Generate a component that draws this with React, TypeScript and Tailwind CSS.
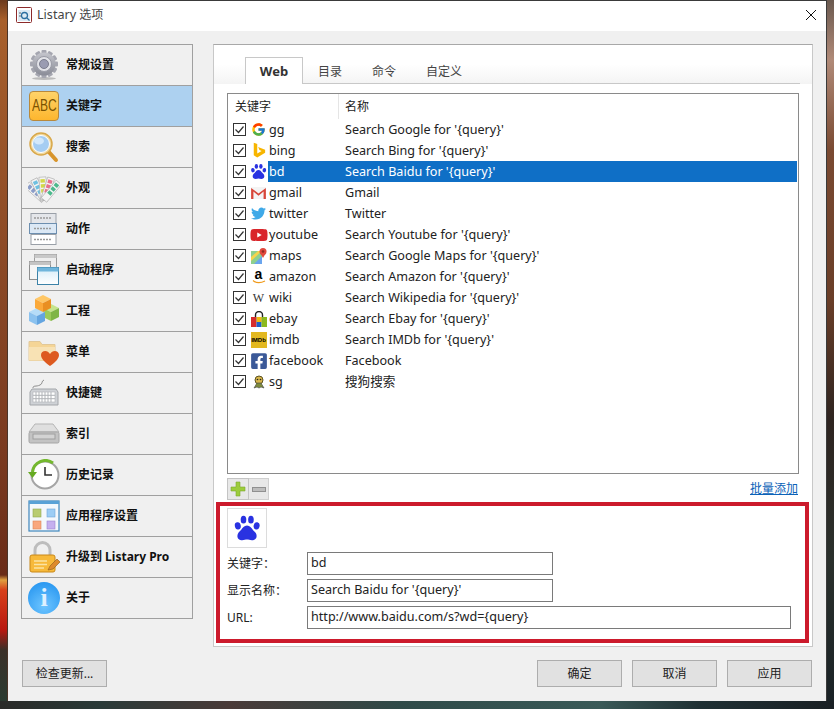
import type { ReactNode } from 'react';
import { FcGoogle } from 'react-icons/fc';
import { FaTwitter, FaYoutube, FaFacebookSquare } from 'react-icons/fa';

const FONT = "font-['Noto_Sans','Noto_Sans_CJK_SC',sans-serif]";
// 拉丁文字比中文略大一点
const LATIN = 'text-[12.6px]';

function Paw({ size = 16, color = '#2932e1' }: { size?: number; color?: string }) {
  return (
    <svg width={size} height={size} viewBox="0 0 32 32">
      <g fill={color}>
        <ellipse cx="5.5" cy="13.5" rx="3.4" ry="4.2" transform="rotate(-12 5.5 13.5)" />
        <ellipse cx="12" cy="6.5" rx="3.2" ry="4.4" />
        <ellipse cx="20.5" cy="6.5" rx="3.2" ry="4.4" />
        <ellipse cx="27" cy="13.5" rx="3.4" ry="4.2" transform="rotate(12 27 13.5)" />
        <path d="M16 13c3.4 0 5 2.6 6.6 5 1.6 2 4.4 3.6 4.4 7 0 3.4-2.8 5-5.4 5-2.4 0-4-.8-5.6-.8s-3.2.8-5.6.8C7.800 30 5 28.400 5 25c0-3.400 2.800-5 4.400-7 1.600-2.400 3.200-5 6.600-5z" />
      </g>
    </svg>
  );
}

function GearIcon() {
  const teeth = [0, 30, 60, 90, 120, 150];
  return (
    <svg width="32" height="32" viewBox="0 0 32 32">
      <defs>
        <linearGradient id="gear" x1="0" y1="0" x2="0" y2="1">
          <stop offset="0" stopColor="#c4c5cc" />
          <stop offset="1" stopColor="#8a8c97" />
        </linearGradient>
      </defs>
      <ellipse cx="16" cy="29.500" rx="12" ry="1.500" fill="#bbb" />
      {teeth.map(a => (
        <rect key={a} x="13.500" y="1" width="5" height="28" rx="1" fill="#a5a6b0" transform={`rotate(${a} 16 15)`} />
      ))}
      <circle cx="16" cy="15" r="11.500" fill="url(#gear)" />
      <circle cx="16" cy="15" r="7.500" fill="#e2e3e8" stroke="#9a9ba6" />
      <circle cx="16" cy="15" r="4.500" fill="#9a9cb2" stroke="#7c7e8e" />
    </svg>
  );
}

function AbcIcon() {
  return (
    <div className="flex h-[30px] w-[30px] items-center justify-center rounded-[4px] border border-[#b8893c] bg-[linear-gradient(#ffd369,#fdb62e)] text-[#7a5200]">
      <span className="scale-x-75 font-['Liberation_Sans',sans-serif] text-[16px] leading-none">ABC</span>
    </div>
  );
}

function SearchIcon() {
  return (
    <svg width="32" height="32" viewBox="0 0 32 32">
      <path d="M20 20l8 9" stroke="#d8952c" strokeWidth="4" strokeLinecap="round" />
      <circle cx="13" cy="13" r="11" fill="#f0d9a0" stroke="#d9a84a" strokeWidth="1.500" />
      <circle cx="13" cy="13" r="8.500" fill="#a5cdf2" stroke="#fff" />
      <ellipse cx="11" cy="10" rx="5" ry="3.500" fill="#d3e8fa" />
    </svg>
  );
}

function PaletteIcon() {
  const cards = [
    { a: -48, c: '#8a9cc8' },
    { a: -26, c: '#6fc0e0' },
    { a: -4, c: '#d4d84a' },
    { a: 18, c: '#e8708c' },
    { a: 40, c: '#4cb88c' },
  ];
  return (
    <svg width="32" height="32" viewBox="0 0 32 32">
      {cards.map(k => (
        <g key={k.a} transform={`rotate(${k.a} 16 28)`}>
          <rect x="12.500" y="5" width="7" height="23" fill="#f4f4f4" stroke="#a8a8a8" strokeWidth=".6" />
          <rect x="13.800" y="7" width="4.400" height="3.500" fill={k.c} />
          <rect x="13.800" y="12" width="4.400" height="3.500" fill={k.c} />
          <rect x="13.800" y="17" width="4.400" height="3.500" fill={k.c} />
        </g>
      ))}
    </svg>
  );
}

function ActionIcon() {
  return (
    <svg width="32" height="32" viewBox="0 0 32 32">
      <rect x="3" y="0.500" width="25" height="10" fill="#e4e6ea" stroke="#9aa0a8" />
      <rect x="3" y="21.500" width="25" height="10" fill="#fff" stroke="#9aa0a8" />
      <rect x="1.500" y="10.500" width="27" height="10" fill="#dbe8f5" stroke="#6d8fb0" />
      <path d="M6 5h18M6 15.500h18M6 26.500h18" stroke="#9a9a9a" strokeWidth="1.600" strokeDasharray="2 1" />
    </svg>
  );
}

function AppsIcon() {
  return (
    <svg width="32" height="32" viewBox="0 0 32 32">
      <rect x="6.500" y="0.500" width="22" height="18" fill="#eee" stroke="#9c9c9c" />
      <rect x="6.500" y="0.500" width="22" height="3.500" fill="#c8c8c8" />
      <rect x="1.500" y="7.500" width="21" height="18" fill="#f5f5f5" stroke="#8f8f8f" />
      <rect x="1.500" y="7.500" width="21" height="3.500" fill="#c4c4c4" />
      <rect x="9.500" y="13.500" width="21" height="17" fill="url(#appsbody)" stroke="#3b82a8" />
      <rect x="9.500" y="13.500" width="21" height="4" fill="#6fb5dc" />
      <defs>
        <linearGradient id="appsbody" x1="0" y1="0" x2="0" y2="1">
          <stop offset="0" stopColor="#d5ecf9" />
          <stop offset="1" stopColor="#ffffff" />
        </linearGradient>
      </defs>
    </svg>
  );
}

function Cube({ x, y, top, left, right }: { x: number; y: number; top: string; left: string; right: string }) {
  return (
    <g transform={`translate(${x} ${y})`}>
      <path d="M0 4l8-4 8 4-8 4z" fill={top} />
      <path d="M0 4l8 4v9l-8-4z" fill={left} />
      <path d="M16 4l-8 4v9l8-4z" fill={right} />
    </g>
  );
}

function ProjectIcon() {
  return (
    <svg width="32" height="32" viewBox="0 0 32 32">
      <Cube x={15} y={9} top="#c5e48c" left="#9ccb5a" right="#7fb546" />
      <Cube x={1} y={13} top="#b5dcf8" left="#8bc2ef" right="#64a5e0" />
      <Cube x={7} y={0} top="#ffc766" left="#fba93a" right="#e98f22" />
    </svg>
  );
}

function MenuIcon() {
  return (
    <svg width="32" height="32" viewBox="0 0 32 32">
      <path d="M1 5.500h11l2 3h13v16H1z" fill="#f5d596" stroke="#e2c898" />
      <rect x="1" y="11" width="26" height="13.500" fill="#f8e2b4" />
      <path d="M22 30c-6-4.500-9-7.500-9-11 0-2.500 2-4 4.200-4 2 0 3.500 1 4.800 3 1.300-2 2.800-3 4.800-3 2.200 0 4.200 1.500 4.200 4 0 3.500-3 6.500-9 11z" fill="#dd5a20" />
    </svg>
  );
}

function KeyboardIcon() {
  return (
    <svg width="32" height="32" viewBox="0 0 32 32">
      <path d="M5 11c0-3 3-1 7-3 3-1 1-4 4-5" stroke="#8d8d8d" fill="none" />
      <path d="M4 12h24l2 3v13H2V15z" fill="#cfd2d6" stroke="#a3a6aa" />
      <rect x="5" y="15" width="22" height="10" fill="#fff" stroke="#aeb1b5" strokeWidth=".6" />
      <path d="M5 18.300h22M5 21.700h22" stroke="#b0b3b7" strokeWidth="1" />
      <path d="M8 15v10M11 15v10M14 15v10M17 15v10M20 15v10M23 15v10" stroke="#b0b3b7" strokeWidth="1" />
    </svg>
  );
}

function IndexIcon() {
  return (
    <svg width="32" height="32" viewBox="0 0 32 32">
      <path d="M7 6h18l6 8H1z" fill="#dfdfdf" stroke="#b5b5b5" />
      <rect x="1" y="14" width="30" height="11" rx="1.500" fill="#c3c3c3" stroke="#a5a5a5" />
      <rect x="5" y="16" width="22" height="5" fill="#d3d3d3" stroke="#9f9f9f" />
    </svg>
  );
}

function HistoryIcon() {
  return (
    <svg width="32" height="32" viewBox="0 0 32 32">
      <circle cx="17" cy="16" r="13.500" fill="#fff" stroke="#a5a5a5" strokeWidth="2" />
      <path d="M4.500 13A13 13 0 0 1 25 4" stroke="#74b82e" strokeWidth="3" fill="none" />
      <path d="M0 13h9l-4.500 6z" fill="#66aa22" />
      <path d="M17 8v8h7" stroke="#333" strokeWidth="1.600" fill="none" />
    </svg>
  );
}

function AppSettingsIcon() {
  return (
    <svg width="32" height="32" viewBox="0 0 32 32">
      <rect x="1" y="1" width="30" height="30" fill="#f4f8fc" stroke="#3f87bd" strokeWidth="1.200" />
      <rect x="1" y="1" width="30" height="3" fill="#5aa2d6" />
      <rect x="5" y="9" width="8" height="8" fill="#b9cc72" stroke="#92a850" strokeWidth=".6" />
      <rect x="19" y="9" width="8" height="8" fill="#9ccdf5" stroke="#6fa5d6" strokeWidth=".6" />
      <rect x="5" y="21" width="8" height="8" fill="#f9a77e" stroke="#dd8558" strokeWidth=".6" />
      <rect x="19" y="21" width="8" height="8" fill="#c5b0ef" stroke="#9a84cc" strokeWidth=".6" />
    </svg>
  );
}

function LockIcon() {
  return (
    <svg width="32" height="32" viewBox="0 0 32 32">
      <path d="M7 15V9a7.500 7.500 0 0 1 15 0v6" fill="none" stroke="#bdbdbd" strokeWidth="3" />
      <rect x="2" y="14" width="25" height="17" rx="2" fill="#f7b93a" stroke="#c98818" />
      <path d="M6 20h13M6 23.500h13M6 27h10" stroke="#fbe3a4" strokeWidth="1.500" />
      <path d="M20 29l2-4 7-7 3 3-7 7z" fill="#dd8a2c" stroke="#8a5a1c" strokeWidth=".6" />
    </svg>
  );
}

function InfoIcon() {
  return (
    <div className="flex h-[32px] w-[32px] items-center justify-center rounded-full bg-[radial-gradient(circle_at_50%_75%,#6ec5ff,#1c8fee)] font-['Liberation_Serif',serif] text-[26px] font-bold leading-none text-[#dff1ff]">
      i
    </div>
  );
}

const NAV: { label: string; icon: ReactNode; active?: boolean }[] = [
  { label: '常规设置', icon: <GearIcon /> },
  { label: '关键字', icon: <AbcIcon />, active: true },
  { label: '搜索', icon: <SearchIcon /> },
  { label: '外观', icon: <PaletteIcon /> },
  { label: '动作', icon: <ActionIcon /> },
  { label: '启动程序', icon: <AppsIcon /> },
  { label: '工程', icon: <ProjectIcon /> },
  { label: '菜单', icon: <MenuIcon /> },
  { label: '快捷键', icon: <KeyboardIcon /> },
  { label: '索引', icon: <IndexIcon /> },
  { label: '历史记录', icon: <HistoryIcon /> },
  { label: '应用程序设置', icon: <AppSettingsIcon /> },
  { label: '升级到 Listary Pro', icon: <LockIcon /> },
  { label: '关于', icon: <InfoIcon /> },
];

function BingIcon() {
  return (
    <svg width="14" height="17" viewBox="0 0 16 18">
      <path d="M2 0l4 1.500v11l5-3-2.500-1.200L7 5l8 3v3.500L6 17l-4-2.500z" fill="#f7b500" />
    </svg>
  );
}

function GmailIcon() {
  return (
    <svg width="15" height="12" viewBox="0 0 16 13">
      <rect width="16" height="13" fill="#f4f4f4" />
      <path d="M0 13V1l8 6 8-6v12h-2.500V5L8 9.500 2.500 5v8z" fill="#d8473a" />
    </svg>
  );
}

function MapsIcon() {
  return (
    <svg width="16" height="16" viewBox="0 0 16 16">
      <path d="M0 3h11v13H0z" fill="#8ed08e" />
      <path d="M0 9l7-6h4L0 13z" fill="#f6d44c" />
      <path d="M3 16l8-8v8z" fill="#6aa5ee" />
      <circle cx="12" cy="3.500" r="3.500" fill="#e0483c" />
      <path d="M9.500 5.500L12 10l2.500-4.500z" fill="#e0483c" />
      <circle cx="12" cy="3.500" r="1.300" fill="#8e2a22" />
    </svg>
  );
}

function AmazonIcon() {
  return (
    <span className="flex flex-col items-center">
      <span className="font-['Liberation_Sans',sans-serif] text-[14px] font-bold leading-[11px] text-black">a</span>
      <svg width="14" height="4" viewBox="0 0 14 4">
        <path d="M1 .5c3 2.500 8 2.500 12 .5" stroke="#f09a1a" strokeWidth="1.200" fill="none" />
      </svg>
    </span>
  );
}

function EbayIcon() {
  return (
    <svg width="16" height="16" viewBox="0 0 16 16">
      <path d="M4.500 6V4a3.500 3.500 0 0 1 7 0v2" fill="none" stroke="#222" strokeWidth="1.400" />
      <rect x="0" y="6" width="5.500" height="10" fill="#d62d2d" />
      <rect x="5.500" y="6" width="5" height="10" fill="#1f5fc7" />
      <rect x="10.500" y="6" width="5.500" height="10" fill="#8cb91e" />
      <rect x="5.500" y="6" width="5" height="5" fill="#f2b90f" />
    </svg>
  );
}

function SogouIcon() {
  return (
    <svg width="14" height="14" viewBox="0 0 14 14">
      <circle cx="7" cy="5" r="4" fill="#d8b64a" stroke="#5b5224" />
      <path d="M2 13l3-5h4l3 5-3-1-2 1-2-1z" fill="#7d8a3c" stroke="#444" strokeWidth=".6" />
      <circle cx="5.500" cy="4.500" r=".8" fill="#222" />
      <circle cx="8.500" cy="4.500" r=".8" fill="#222" />
    </svg>
  );
}

const ROWS: { key: string; name: string; icon: ReactNode; active?: boolean }[] = [
  { key: 'gg', name: "Search Google for '{query}'", icon: <FcGoogle size={15} /> },
  { key: 'bing', name: "Search Bing for '{query}'", icon: <BingIcon /> },
  { key: 'bd', name: "Search Baidu for '{query}'", icon: <Paw size={17} />, active: true },
  { key: 'gmail', name: 'Gmail', icon: <GmailIcon /> },
  { key: 'twitter', name: 'Twitter', icon: <FaTwitter size={15} color="#3fa9e8" /> },
  { key: 'youtube', name: "Search Youtube for '{query}'", icon: <FaYoutube size={18} color="#d9252a" /> },
  { key: 'maps', name: "Search Google Maps for '{query}'", icon: <MapsIcon /> },
  { key: 'amazon', name: "Search Amazon for '{query}'", icon: <AmazonIcon /> },
  {
    key: 'wiki',
    name: "Search Wikipedia for '{query}'",
    icon: <span className="font-['Liberation_Serif',serif] text-[12px] leading-none text-[#333]">W</span>,
  },
  { key: 'ebay', name: "Search Ebay for '{query}'", icon: <EbayIcon /> },
  {
    key: 'imdb',
    name: "Search IMDb for '{query}'",
    icon: (
      <span className="flex h-[16px] w-[16px] items-center justify-center bg-[#e3b81f] font-['Liberation_Sans',sans-serif] text-[6px] font-bold leading-none text-black">
        IMDb
      </span>
    ),
  },
  { key: 'facebook', name: 'Facebook', icon: <FaFacebookSquare size={18} color="#3b5998" /> },
  { key: 'sg', name: '搜狗搜索', icon: <SogouIcon /> },
];

function CheckBox() {
  return (
    <svg width="13" height="13" viewBox="0 0 13 13" className="shrink-0">
      <rect x=".5" y=".5" width="12" height="12" fill="#fff" stroke="#333" />
      <path d="M2.500 6.500l3 3 5-6" fill="none" stroke="#333" strokeWidth="1.200" />
    </svg>
  );
}

function Row({ row }: { row: (typeof ROWS)[number] }) {
  return (
    <div className="flex h-[21px] items-center pl-[5px] pr-px">
      <CheckBox />
      <div className={`ml-[3px] flex h-full flex-1 items-center ${LATIN} ${row.active ? 'bg-[#0f6fc6] text-white' : 'text-[#222]'}`}>
        <span className={`flex h-full w-[19px] items-center justify-center ${row.active ? 'bg-white' : ''}`}>{row.icon}</span>
        <span className="ml-px mt-[2px] w-[76px]">{row.key}</span>
        <span className="mt-[2px]">{row.name}</span>
      </div>
    </div>
  );
}

function Field({ label, value, wide }: { label: string; value: string; wide?: boolean }) {
  return (
    <div className="flex h-[23px] items-center">
      <span className="w-[80px]">{label}</span>
      <div className={`flex h-[23px] items-center border border-[#7a7a7a] bg-white pl-[3px] ${LATIN} ${wide ? 'w-[484px]' : 'w-[246px]'}`}>{value}</div>
    </div>
  );
}

function Btn({ children, className = '' }: { children: ReactNode; className?: string }) {
  return (
    <button className={`flex h-[27px] w-[85px] items-center justify-center border border-[#adadad] bg-[#e1e1e1] text-[12px] text-[#222] ${className}`}>
      {children}
    </button>
  );
}

export default function App() {
  return (
    <div className={`flex h-[709px] w-[834px] flex-col overflow-hidden bg-[#1d2628] text-[12px] leading-none text-[#222] ${FONT}`}>
      <div className="flex h-[701px]">
        <div className="w-[8px] border-r border-[#4a3428] bg-[linear-gradient(#6b3a1e_0px,#a8602c_20px,#8c4a26_250px,#7a3a20_450px,#6a2c18_575px,#e0a040_580px,#d8401a_590px,#b81810_630px,#3a3028_650px,#2a3a30_701px)]" />
        <div className="flex w-[818px] flex-col border-t border-[#3a3a3a] bg-[#f0f0f0]">
          <div className="flex h-[30px] items-center justify-between bg-white pb-[2px] pl-[8px] pr-[9px]">
            <div className="flex items-center gap-[5px]">
              <svg width="16" height="16" viewBox="0 0 16 16">
                <rect x=".5" y=".5" width="15" height="15" rx="1" fill="#fff" stroke="#8c2a2a" />
                <rect x="2" y="3" width="12" height="11" fill="#dbeaf4" />
                <circle cx="8.500" cy="8.500" r="3" fill="none" stroke="#2a6fa0" strokeWidth="1.300" />
                <path d="M11 11l2.500 2.500" stroke="#2a6fa0" strokeWidth="1.300" />
                <path d="M3 6h2M3 9h2" stroke="#666" />
              </svg>
              <span className="text-[#444]">
                <span className={LATIN}>Listary</span> 选项
              </span>
            </div>
            <svg width="12" height="12" viewBox="0 0 12 12">
              <path d="M1 1l10 10M11 1L1 11" stroke="#111" strokeWidth="1" />
            </svg>
          </div>
          <div className="flex flex-1 flex-col pb-[14px] pl-[13px] pr-[13px] pt-[13px]">
            <div className="flex flex-1 gap-[20px]">
              <div className="h-[575px] w-[172px] border-x border-t border-[#a0a0a0]">
                {NAV.map(n => (
                  <div
                    key={n.label}
                    className={`flex h-[41px] items-center border-b border-[#a0a0a0] pl-[6px] ${n.active ? 'bg-[#add1f0]' : ''}`}
                  >
                    <span className="flex w-[32px] items-center justify-center">{n.icon}</span>
                    <span className="ml-[6px] font-bold text-[#111]">{n.label}</span>
                  </div>
                ))}
              </div>
              <div className="flex h-[603px] w-[600px] flex-col border border-[#c8c8c8] border-t-[#a8a8a8] bg-white">
                <div className="h-[39px] bg-[linear-gradient(#fff_50%,#f4f4f4)] pl-[31px] pr-[12px]">
                  <div className="flex h-full items-end border-b border-[#c8c8c8]">
                    <div className="-mb-px flex h-[27px] w-[58px] items-center justify-center border border-b-0 border-[#c8c8c8] bg-white text-[13px] font-bold text-[#333]">Web</div>
                    <div className="flex h-[26px] items-center gap-[30px] pl-[15px] pt-[3px] text-[#444]">
                      <span>目录</span>
                      <span>命令</span>
                      <span>自定义</span>
                    </div>
                  </div>
                </div>
                <div className="flex flex-1 flex-col px-[13px] pt-[9px]">
                  <div className="h-[381px] w-[572px] border border-[#8a8a8a] bg-white">
                    <div className="flex h-[25px] items-center text-[#222]">
                      <span className="w-[110px] pl-[7px]">关键字</span>
                      <span className="h-full w-px bg-[#e5e5e5]" />
                      <span className="pl-[6px]">名称</span>
                    </div>
                    {ROWS.map(r => (
                      <Row key={r.key} row={r} />
                    ))}
                  </div>
                  <div className="flex h-[28px] items-start justify-between pt-[4px]">
                    <div className="flex">
                      <div className="flex h-[22px] w-[22px] items-center justify-center border border-[#c4c4c4] bg-[#e8e8e8]">
                        <svg width="16" height="16" viewBox="0 0 16 16">
                          <path d="M6 1h4v5h5v4h-5v5H6v-5H1V6h5z" fill="#9ccc3c" stroke="#7ea82c" strokeWidth=".6" />
                        </svg>
                      </div>
                      <div className="flex h-[22px] w-[20px] items-center justify-center border-y border-r border-[#d0d0d0] bg-[#e8e8e8]">
                        <span className="h-[5px] w-[14px] border border-[#909090] bg-[#bdbdbd]" />
                      </div>
                    </div>
                    <a className="mr-px mt-[5px] text-[#0b62b8] underline">批量添加</a>
                  </div>
                </div>
                <div className="mb-[3px] ml-[2px] mr-[3px] flex h-[141px] flex-col border-4 border-[#cc1a2c] px-[7px] pt-[2px]">
                  <div className="flex h-[40px] w-[40px] items-center justify-center border border-[#dcdcdc]">
                    <Paw size={28} />
                  </div>
                  <div className="mt-[4px] flex flex-col gap-[4px]">
                    <Field label="关键字：" value="bd" />
                    <Field label="显示名称：" value="Search Baidu for '{query}'" />
                    <Field label="URL:" value="http://www.baidu.com/s?wd={query}" wide />
                  </div>
                </div>
              </div>
            </div>
            <div className="flex items-center justify-between pr-px">
              <Btn className="ml-px">检查更新...</Btn>
              <div className="flex gap-[10px]">
                <Btn>确定</Btn>
                <Btn>取消</Btn>
                <Btn>应用</Btn>
              </div>
            </div>
          </div>
        </div>
        <div className="w-[8px] border-l border-[#3a3a3a] bg-[linear-gradient(#6b5a50_0px,#b08a78_60px,#7a4a32_150px,#6a3e28_300px,#2e2420_420px,#2a302c_560px,#1a2226_701px)]" />
      </div>
      <div className="h-[8px] bg-[linear-gradient(90deg,#2a2a28,#2a3a38_100px,#4a3a38_230px,#2f4a48_400px,#3a5a58_600px,#1f3034_700px,#1a2024)]" />
    </div>
  );
}
